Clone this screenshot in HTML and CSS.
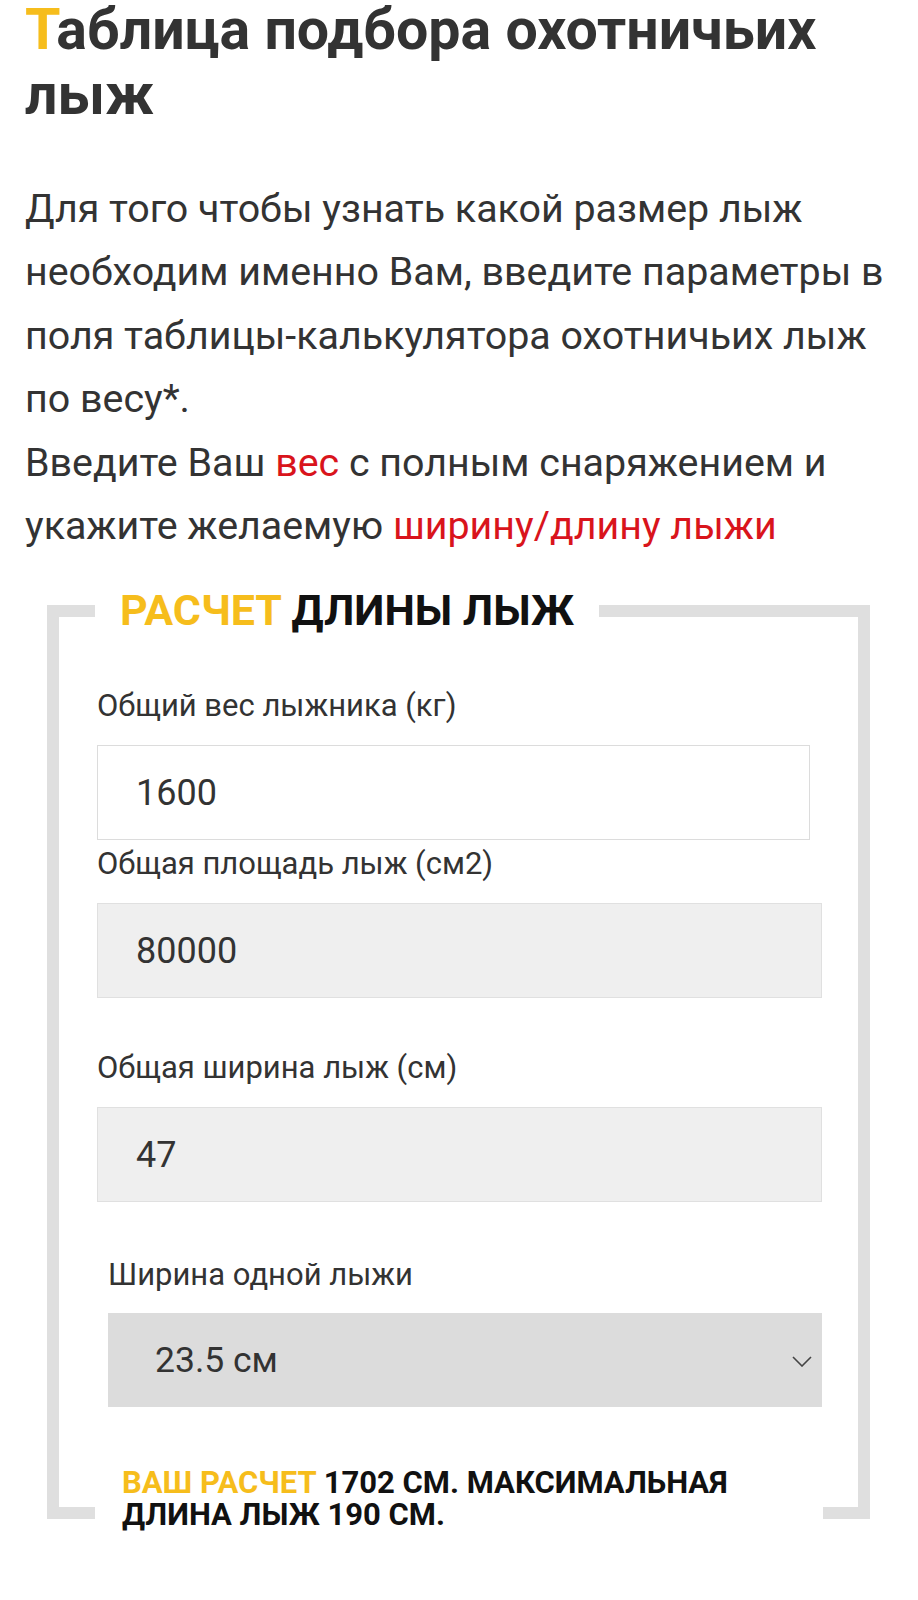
FILE: index.html
```html
<!DOCTYPE html>
<html lang="ru">
<head>
<meta charset="utf-8">
<title>Таблица подбора охотничьих лыж</title>
<link rel="stylesheet" href="styles.css">
</head>
<body>
<div class="page">
  <h1 class="title"><span class="accent">Т</span>аблица подбора охотничьих лыж</h1>
  <p class="intro">Для того чтобы узнать какой размер лыж необходим именно Вам, введите параметры в поля таблицы-калькулятора охотничьих лыж по весу*.<br>Введите Ваш <span class="red">вес</span> с полным снаряжением и укажите желаемую <span class="red">ширину/длину лыжи</span></p>

  <fieldset class="calc">
    <legend class="calc-legend"><span class="yellow">РАСЧЕТ</span> ДЛИНЫ ЛЫЖ</legend>

    <div class="field field-first">
      <label class="field-label" for="w">Общий вес лыжника (кг)</label>
      <input class="field-input input-white" id="w" type="text" value="1600">
    </div>

    <div class="field">
      <label class="field-label" for="a">Общая площадь лыж (см2)</label>
      <input class="field-input input-gray" id="a" type="text" value="80000">
    </div>

    <div class="field field-third">
      <label class="field-label" for="s">Общая ширина лыж (см)</label>
      <input class="field-input input-gray" id="s" type="text" value="47">
    </div>

    <div class="field field-select">
      <label class="field-label" for="one">Ширина одной лыжи</label>
      <div class="select-wrap">
        <select class="field-select-box" id="one">
          <option>23.5 см</option>
        </select>
        <svg class="chevron" width="20" height="11" viewBox="0 0 20 11"><path d="M1 1 L10 10 L19 1" fill="none" stroke="#444" stroke-width="1.6"/></svg>
      </div>
    </div>

    <div class="result"><span class="yellow">ВАШ РАСЧЕТ</span> 1702 СМ. МАКСИМАЛЬНАЯ ДЛИНА ЛЫЖ 190 СМ.</div>
  </fieldset>
</div>
</body>
</html>
```
FILE: styles.css
```css
html, body {
  margin: 0;
  padding: 0;
  background: #fff;
}

body {
  font-family: Roboto, "Noto Sans", "DejaVu Sans", sans-serif;
  color: #333;
}

.page {
  padding: 0 0 60px 25px;
}

.title {
  margin: -3px 0 0 0;
  font-size: 57.3px;
  line-height: 65px;
  font-weight: 700;
  color: #333;
}

.accent {
  color: #f6bd1c;
}

.intro {
  max-width: 868px;
  margin: 50px 0 0 0;
  font-size: 39.4px;
  line-height: 63.4px;
  font-weight: 400;
  color: #333;
}

.red {
  color: #d9141c;
}

.yellow {
  color: #f6bd1c;
}

.calc {
  margin: 32px 48px 0 22px;
  padding: 56px 36px 0 38px;
  border: 12px solid #dfdfdf;
  min-width: 0;
}

.calc-legend {
  margin-left: -2px;
  padding: 0 25px;
  font-size: 43px;
  line-height: 43px;
  font-weight: 700;
  color: #111;
}

.field {
  display: flex;
  flex-direction: column;
  margin-bottom: 52px;
}

.field-first {
  margin-bottom: 6px;
}

.field-third {
  margin-bottom: 55px;
}

.field-label {
  font-size: 31px;
  line-height: 36px;
  color: #333;
  margin-bottom: 21px;
}

.field-input {
  box-sizing: border-box;
  height: 95px;
  padding: 0 0 0 38px;
  font-family: Roboto, "Noto Sans", sans-serif;
  font-size: 36px;
  color: #333;
  outline: none;
}

.input-white {
  width: 713px;
  background: #fff;
  border: 1px solid #dcdcdc;
}

.input-gray {
  width: 100%;
  background: #efefef;
  border: 1px solid #e0e0e0;
}

.field-select {
  margin-left: 11px;
  margin-bottom: 0;
}

.field-select .field-label {
  margin-bottom: 20px;
}

.select-wrap {
  position: relative;
}

.field-select-box {
  appearance: none;
  -webkit-appearance: none;
  box-sizing: border-box;
  width: 100%;
  height: 94px;
  border: 0;
  border-radius: 0;
  padding: 0 0 0 47px;
  background: #dcdcdc;
  font-family: Roboto, "Noto Sans", sans-serif;
  font-size: 35.5px;
  color: #333;
  outline: none;
}

.chevron {
  position: absolute;
  right: 10px;
  top: 43px;
}

.result {
  position: relative;
  margin: 60px 0 -24px -2px;
  width: 674px;
  padding: 0 27px;
  background: #fff;
  font-size: 31px;
  line-height: 32px;
  font-weight: 700;
  color: #111;
}
```
